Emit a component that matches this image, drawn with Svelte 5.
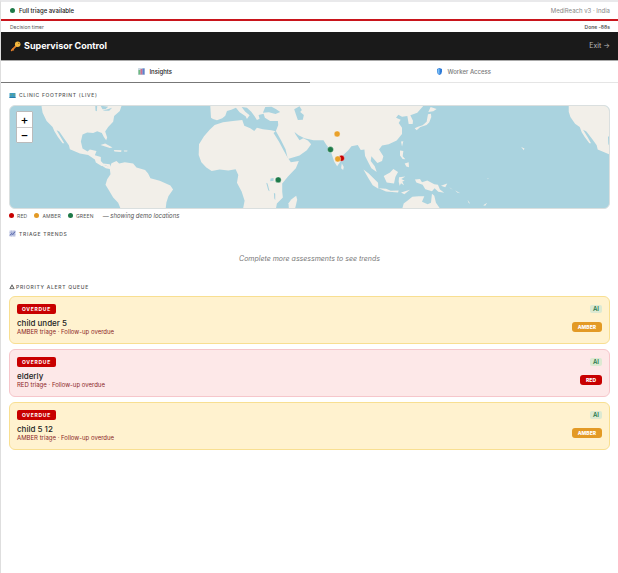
<script>
    let tab = $state('insights');
    let zoom = $state(1);

    const levels = [
        { name: 'RED', tone: 'red' },
        { name: 'AMBER', tone: 'amber' },
        { name: 'GREEN', tone: 'green' },
    ];
    const clinics = [
        { x: 1026, y: 172, tone: 'red' },
        { x: 1015, y: 174, tone: 'amber' },
        { x: 1013, y: 99, tone: 'amber' },
        { x: 993, y: 146, tone: 'green' },
        { x: 836, y: 237, tone: 'green' },
    ];
    const alerts = [
        { patient: 'child under 5', level: 'AMBER', tone: 'amber' },
        { patient: 'elderly', level: 'RED', tone: 'red' },
        { patient: 'child 5 12', level: 'AMBER', tone: 'amber' },
    ];
    const land = [
        // North and Central America
        'M125 0L125 18L128 35L140 60L158 78L163 90L174 108L188 127L193 127L182 108L170 88L178 92L192 112L207 133L210 145L240 158L265 162L285 176L288 185L305 195L318 193L332 202L330 190L310 188L303 180L303 168L285 163L290 150L270 146L263 152L248 143L243 122L248 101L262 95L280 96L292 91L306 96L312 108L319 118L322 110L316 92L325 78L340 62L343 45L360 30L370 0Z',
        // South America
        'M300 190L318 194L330 199L335 187L350 180L358 188L375 184L400 188L410 200L436 207L445 218L452 232L480 240L512 254L520 266L506 286L500 305L497 330L365 330L355 306L340 290L328 270L317 252L322 235L332 220L330 204L318 202Z',
        'M302 132L316 128L338 140L330 141ZM342 147L365 148L364 153L344 152ZM372 149L383 149L382 152L373 152Z',
        // Africa
        'M645 72L670 64L700 60L728 57L734 74L752 82L764 90L772 80L790 85L815 88L828 91L822 96L838 122L852 148L864 170L874 184L898 180L889 202L866 226L848 248L848 273L850 290L832 308L828 330L729 330L735 300L726 272L712 246L716 222L708 205L686 209L660 206L636 210L620 200L605 184L597 162L598 130L613 106L630 86Z',
        'M868 322L867 307L875 296L890 285L893 297L885 330Z',
        // Europe and Asia
        'M632 18L634 50L640 54L652 58L668 52L677 44L682 30L695 26L709 20L720 34L738 46L742 54L750 43L737 32L726 18L742 20L755 32L765 46L772 57L780 53L777 42L792 38L796 50L812 60L835 60L836 72L829 90L844 117L858 145L865 174L900 164L922 148L935 130L925 119L911 112L900 118L888 100L885 93L897 103L915 112L942 118L972 118L980 131L993 148L1004 182L1013 196L1023 182L1025 168L1046 149L1056 136L1075 132L1084 147L1095 146L1097 165L1108 187L1116 202L1132 213L1126 196L1114 180L1116 166L1134 186L1148 180L1152 166L1139 146L1148 134L1168 130L1192 119L1208 99L1208 80L1198 66L1204 56L1190 50L1197 41L1208 47L1224 45L1228 69L1240 69L1241 59L1233 43L1254 35L1285 0L632 0Z',
        // Japan
        'M1246 82L1256 77L1270 73L1282 62L1286 40L1295 38L1296 48L1290 64L1282 72L1263 78L1252 88ZM1287 33L1294 18L1312 24L1302 31Z',
        // Islands of south and east Asia
        'M1027 187L1033 198L1031 207L1025 202ZM1092 206L1108 218L1136 246L1137 264L1120 253L1107 232ZM1138 262L1160 264L1174 270L1198 269L1196 275L1160 272ZM1153 225L1172 215L1182 204L1196 213L1188 228L1184 248L1162 245ZM1199 229L1218 227L1206 234L1216 240L1209 242L1214 253L1205 247L1201 255L1198 243ZM1202 149L1212 150L1210 166L1218 175L1210 174L1202 164ZM1216 188L1228 184L1229 199L1221 197ZM1205 122L1212 121L1208 137ZM1205 275L1232 267L1215 280Z',
        // New Guinea and Australia
        'M1247 236L1262 234L1268 244L1284 239L1305 250L1316 252L1322 266L1335 276L1317 273L1306 262L1298 271L1278 265L1270 252L1251 245ZM1325 255L1344 248L1338 259ZM1207 330L1213 308L1226 298L1239 288L1258 286L1275 286L1268 303L1285 310L1295 306L1298 279L1305 285L1310 306L1327 330Z',
        'M1350 259L1361 267L1354 263ZM1368 269L1383 277L1374 275ZM1405 297L1413 309L1408 306ZM1452 313L1464 306L1458 315ZM1566 138L1576 143L1574 148ZM1465 231L1468 232L1466 235Z',
        // North America, wrapped round
        'M1709 0L1709 32L1714 48L1728 68L1742 78L1748 94L1757 108L1771 127L1776 127L1766 109L1752 86L1762 92L1780 115L1793 133L1796 146L1835 162L1835 138L1828 130L1827 108L1840 96L1840 0Z',
    ];
    const lakes = [
        'M790 35L797 18L816 17L830 25L842 33L828 39L808 34Z',
        'M884 25L900 16L907 27L902 33L913 42L910 56L895 57L890 43Z',
        'M813 233L822 231L822 240L812 241ZM800 246L804 248L810 271L806 268ZM823 276L827 279L827 298L824 292Z',
        'M286 12L292 15L291 31L287 29ZM302 14L325 17L317 25L308 25ZM308 29L337 20L328 29Z',
    ];
</script>

<div class="app">
    <div class="status">
        <span class="online"><i class="dot green"></i>Full triage available</span>
        <span class="version">MediReach v3 · India</span>
    </div>
    <div class="timer">
        <span>Decision timer</span>
        <b>Done -88s</b>
    </div>
    <header>
        <h1>
            <svg class="key" viewBox="0 0 20 20" aria-hidden="true">
                <path d="M3 17L12 8" stroke="#e7812c" stroke-width="3" stroke-linecap="round" />
                <path d="M4 14L7 17" stroke="#e7812c" stroke-width="2" />
                <circle cx="14" cy="6" r="5" fill="#f5b83d" />
                <circle cx="16" cy="4" r="1" fill="#4b3922" />
            </svg>
            Supervisor Control
        </h1>
        <button class="exit">Exit →</button>
    </header>
    <nav>
        <button class:active={tab === 'insights'} onclick={() => (tab = 'insights')}>
            <svg viewBox="0 0 14 14" aria-hidden="true">
                <rect width="14" height="14" rx="1" fill="#c9d8e2" />
                <path d="M1 4h4v9H1z" fill="#6fba80" />
                <path d="M5 2h4v11H5z" fill="#d06c92" />
                <path d="M9 1h4v12H9z" fill="#5a80cf" />
            </svg>
            Insights
        </button>
        <button class:active={tab === 'workers'} onclick={() => (tab = 'workers')}>
            <svg viewBox="0 0 14 14" aria-hidden="true">
                <path d="M7 0L12 2V7Q12 12 7 14Q2 12 2 7V2Z" fill="#2f7bd8" />
                <path d="M7 1L3 3V7Q3 11 7 13Z" fill="#7bc0f5" />
            </svg>
            Worker Access
        </button>
    </nav>

    <main>
        <section>
            <h2>
                <svg viewBox="0 0 14 14" aria-hidden="true">
                    <rect x="1" y="2" width="12" height="10" rx="1" fill="#3b9dc5" />
                    <path d="M2 4L5 3L6 6L3 8ZM8 4L12 3V7L10 9Z" fill="#5f9f91" />
                    <path d="M1 10h12v2H1z" fill="#287ba6" />
                </svg>
                CLINIC FOOTPRINT (LIVE)
            </h2>
            <div class="map">
                <svg viewBox="30 15 1800 306" preserveAspectRatio="xMidYMid slice" role="img" aria-label="Clinic locations">
                    {#each land as d}
                        <path {d} class="land" />
                    {/each}
                    {#each lakes as d}
                        <path {d} class="water" />
                    {/each}
                    {#each clinics as clinic}
                        <circle class="pin {clinic.tone}" cx={clinic.x} cy={clinic.y} r="9" />
                    {/each}
                </svg>
                <div class="zoom">
                    <button aria-label="Zoom in" onclick={() => zoom++}>+</button>
                    <button aria-label="Zoom out" onclick={() => zoom--}>−</button>
                </div>
            </div>
            <div class="legend">
                {#each levels as level}
                    <span><i class="dot {level.tone}"></i>{level.name}</span>
                {/each}
                <em>— showing demo locations</em>
            </div>
        </section>

        <section>
            <h2>
                <svg viewBox="0 0 14 14" aria-hidden="true">
                    <rect x="1" y="1" width="12" height="12" fill="#c5cce6" />
                    <path d="M1 5h12M1 9h12M5 1v12M10 1v12" stroke="#a2add4" />
                    <path d="M2 11L5 7L8 9L12 3" fill="none" stroke="#5969ad" stroke-width="2" />
                </svg>
                TRIAGE TRENDS
            </h2>
            <p class="empty">Complete more assessments to see trends</p>
        </section>

        <section>
            <h2 class="queue">
                <svg viewBox="0 0 14 14" aria-hidden="true">
                    <path d="M7 3L12 12H2ZM7 6v3" fill="none" stroke="#555" stroke-width="2" />
                </svg>
                PRIORITY ALERT QUEUE
            </h2>
            <div class="alerts">
                {#each alerts as alert}
                    <article class={alert.tone}>
                        <div class="row">
                            <span class="overdue">OVERDUE</span>
                            <span class="ai">AI</span>
                        </div>
                        <div class="row">
                            <div>
                                <h3>{alert.patient}</h3>
                                <p>{alert.level} triage · Follow-up overdue</p>
                            </div>
                            <span class="level">{alert.level}</span>
                        </div>
                    </article>
                {/each}
            </div>
        </section>
    </main>
</div>

<style>
    :global(body) {
        background: #fff;
    }
    .app {
        min-height: 100vh;
        box-sizing: border-box;
        border-top: 2px solid #e9e9eb;
        border-left: 1px solid #dedede;
        background: #fff;
        color: #222;
        font-family: Inter, 'Liberation Sans', sans-serif;
        font-size: 5px;
        line-height: 8px;
    }
    h1, h2, h3, p {
        margin: 0;
    }
    button {
        padding: 0;
        border: none;
        background: none;
        font: inherit;
        cursor: pointer;
    }
    .status, .timer, header {
        display: flex;
        align-items: center;
        justify-content: space-between;
        padding: 0 8px 0 9px;
    }
    .status {
        height: 17px;
        border-bottom: 2px solid #c9151c;
        font-size: 6px;
    }
    .online {
        display: flex;
        align-items: center;
        gap: 4px;
        font-weight: 500;
    }
    .version {
        color: #888;
    }
    .timer {
        height: 11px;
        color: #555;
    }
    .timer b {
        font-weight: 600;
    }
    .dot {
        width: 5px;
        height: 5px;
        border-radius: 50%;
    }
    .dot.red { background: #c80000; }
    .dot.amber { background: #e39a25; }
    .dot.green { background: #1e7a48; }

    header {
        height: 28px;
        background: #1a1a1a;
        color: #fff;
    }
    h1 {
        display: flex;
        align-items: center;
        gap: 3px;
        font-size: 9px;
        font-weight: 700;
        line-height: 12px;
    }
    .key {
        width: 11px;
        height: 11px;
    }
    .exit {
        color: #bbb;
        font-size: 7px;
    }
    nav {
        display: flex;
        border-top: 1px solid #aaa;
    }
    nav button {
        display: flex;
        flex: 1;
        align-items: center;
        justify-content: center;
        gap: 4px;
        height: 22px;
        border-bottom: 1px solid #e5e5e5;
        color: #777;
        font-size: 6px;
        font-weight: 500;
    }
    nav .active {
        border-bottom-color: #777;
        color: #222;
    }
    nav svg {
        width: 7px;
        height: 7px;
    }

    main {
        padding: 8px;
    }
    h2 {
        display: flex;
        align-items: center;
        gap: 3px;
        color: #555;
        font-size: 5px;
        font-weight: 500;
        letter-spacing: 0.14em;
        line-height: 8px;
    }
    h2 svg {
        width: 7px;
        height: 7px;
    }
    .queue {
        gap: 1px;
    }
    .queue svg {
        width: 6px;
    }
    .map {
        position: relative;
        margin: 6px 0 3px;
        overflow: hidden;
        border: 1px solid #dadfdf;
        border-radius: 6px;
        background: #aad3df;
    }
    .map > svg {
        display: block;
        width: 100%;
    }
    .land {
        fill: #f2efe9;
    }
    .water {
        fill: #aad3df;
    }
    .pin {
        stroke: #fff8;
        stroke-width: 2;
    }
    .pin.red { fill: #c80000; }
    .pin.amber { fill: #e9a12b; }
    .pin.green { fill: #1e7a48; }
    .zoom {
        position: absolute;
        top: 5px;
        left: 6px;
        width: 15px;
        border: 1px solid #bbb;
        border-radius: 1px;
        background: #fff;
    }
    .zoom button {
        display: block;
        width: 100%;
        height: 15px;
        color: #000;
        font-size: 12px;
        font-weight: 500;
        line-height: 14px;
    }
    .zoom button + button {
        border-top: 1px solid #ccc;
    }
    .legend {
        display: flex;
        align-items: center;
        gap: 7px;
        margin-bottom: 10px;
        color: #555;
    }
    .legend span {
        display: flex;
        align-items: center;
        gap: 3px;
        letter-spacing: 0.04em;
    }
    .legend em {
        margin-left: 2px;
        font-size: 6px;
    }
    .empty {
        padding: 16px 0 20px;
        color: #777;
        font-size: 7px;
        font-style: italic;
        line-height: 9px;
        text-align: center;
    }
    .alerts {
        display: grid;
        gap: 5px;
        margin-top: 5px;
    }
    article {
        padding: 7px;
        border: 1px solid;
        border-radius: 6px;
    }
    article.amber {
        border-color: #f8df91;
        background: #fff2cf;
    }
    article.red {
        border-color: #f6c6cb;
        background: #fde8e8;
    }
    .row {
        display: flex;
        align-items: center;
        justify-content: space-between;
    }
    .row + .row {
        margin-top: 4px;
    }
    .overdue {
        padding: 1px 5px;
        border-radius: 2px;
        background: #c80000;
        color: #fff;
        font-weight: 700;
        letter-spacing: 0.14em;
    }
    .ai {
        padding: 0 3px;
        border-radius: 2px;
        background: #dce9d2;
        color: #26774a;
        font-size: 6px;
        font-weight: 600;
    }
    h3 {
        color: #222;
        font-size: 8px;
        font-weight: 500;
        line-height: 10px;
    }
    article p {
        color: #8b2525;
        font-size: 6px;
        line-height: 8px;
    }
    .level {
        padding: 1px 6px;
        border-radius: 3px;
        color: #fff;
        font-size: 5px;
        font-weight: 800;
    }
    .amber .level { background: #e39a25; }
    .red .level { background: #c80000; }
</style>
